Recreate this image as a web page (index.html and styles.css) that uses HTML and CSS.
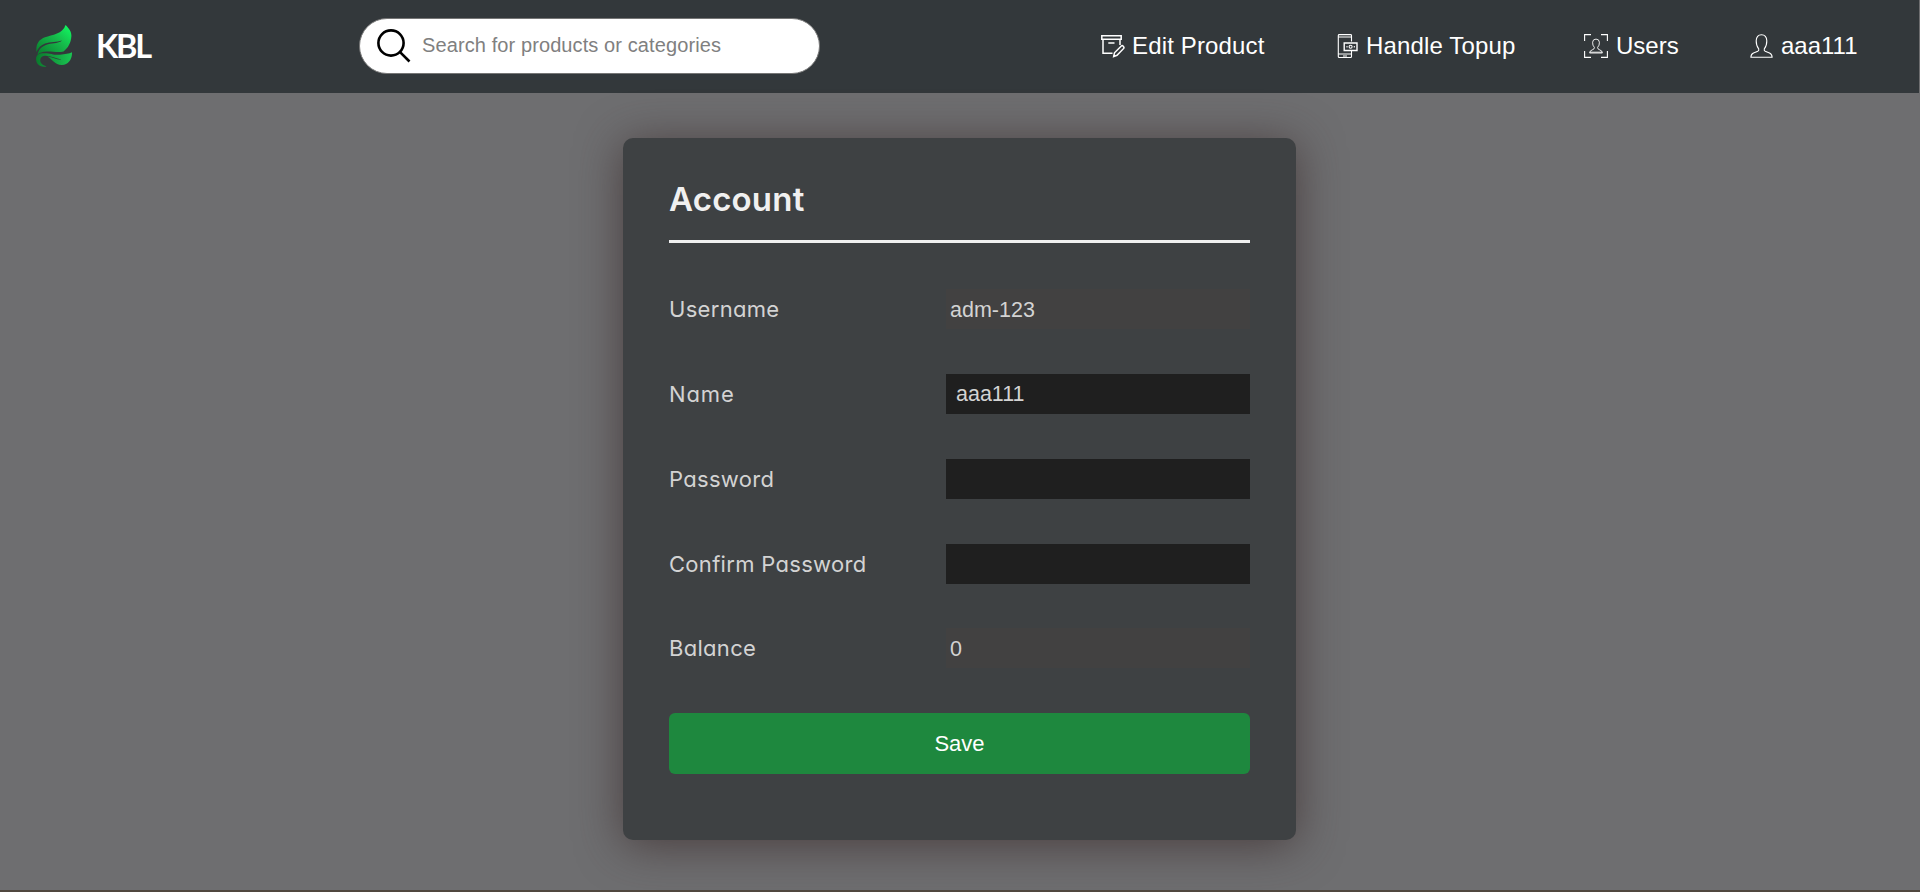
FILE: index.html
```html
<!DOCTYPE html>
<html lang="en">
<head>
<meta charset="utf-8">
<title>KBL - Account</title>
<link rel="stylesheet" href="styles.css">
</head>
<body>
<header class="header">
  <a class="brand">
    <svg class="brand-icon" viewBox="0 0 36 42" width="36" height="42">
      <defs>
        <linearGradient id="leaf" x1="0" y1="1" x2="1" y2="0"><stop offset="0" stop-color="#087a2b"/><stop offset=".55" stop-color="#16b84a"/><stop offset="1" stop-color="#10ff63"/></linearGradient>
        <linearGradient id="leaf2" x1="0" y1="0" x2="1" y2="0"><stop offset="0" stop-color="#0a7a2c"/><stop offset="1" stop-color="#1ac552"/></linearGradient>
      </defs>
      <path fill="url(#leaf)" d="M.4 27C-.3 19 3 14.500 9 12.300C16 9.800 27 9 29.500 0C32.500 3 35.500 6 35.400 11C35 18 32 23 27.500 26.500C22 28 17 26.300 11 26.500C6.500 26.500 3 28 1.500 30C2 25 6 20.800 12 19.200C18 18.200 23 18.200 26 15.500C21 17.300 14 16.800 9 18.600C5 20.200 2 23 .4 27Z"/>
      <path fill="url(#leaf2)" d="M.1 33C.5 30 3 28.300 7.500 28.200C15 28 18 30.500 24 29.700C29 29 33 29 36 27.300C36.300 34 32.500 39.800 26 40C19 40.200 16.500 34.500 11.500 31.600C17 32.400 20.500 35 25.500 34.600C20 33.400 14 30.400 8.500 30.800C3 31.600 1.800 38.800 10.500 41.400C3 42.800-.5 38 .1 33Z"/>
    </svg>
    <span class="brand-name">KBL</span>
  </a>
  <div class="search">
    <svg class="search-icon" viewBox="0 0 34 34" width="34" height="34"><circle cx="14" cy="14" r="12.6"/><path d="M22.8 22.8 32.5 32.5"/></svg>
    <input class="search-input" type="text" placeholder="Search for products or categories">
  </div>
  <nav class="nav">
    <a class="nav-item nav-edit">
      <svg viewBox="0 0 24 24" width="24" height="24"><path stroke-width="1.5" d="M.8 1.8H20.2V5.3H.8ZM2 5.5V19.2H11.5M19 5.5V11M7.3 9H13.5M12.7 22.5 13.5 18.8 20.3 12Q21.2 11.2 22.3 12.2T22.7 14.4L16 21.3Z"/></svg>
      <span>Edit Product</span>
    </a>
    <a class="nav-item nav-topup">
      <svg viewBox="0 0 24 24" width="24" height="24"><path d="M14.500 7.500V1.500Q14.500.6 13.500.6H2.300Q1.300.6 1.300 1.500V22.500Q1.300 23.500 2.300 23.500H13.500Q14.500 23.500 14.500 22.500V17M1.500 3H14.500M1.500 20H14.500M6 22H10"/><path stroke-width="1.400" d="M7.200 9H20V16.500H7.200Z"/><circle cx="13.600" cy="12.700" r="1.500"/><path d="M10 12V13.500M17.300 12V13.500"/></svg>
      <span>Handle Topup</span>
    </a>
    <a class="nav-item nav-users">
      <svg viewBox="0 0 24 24" width="24" height="24"><path d="M.6 7V.6H7M17 .6H23.4V7M23.4 17V23.4H17M7 23.4H.6V17"/><path stroke-width=".9" d="M5.6 19Q5.600 16.700 8.200 15.900Q10.600 15.200 10.400 13.400Q8.400 11.500 8.600 8.200Q8.800 5.100 12 5.100T15.400 8.200Q15.600 11.500 13.600 13.400Q13.400 15.200 15.800 15.900Q18.400 16.700 18.400 19ZM6 18.200H18"/></svg>
      <span>Users</span>
    </a>
    <a class="nav-item nav-account">
      <svg viewBox="0 0 24 24" width="24" height="24"><path d="M.9 23.300Q.9 20.200 3.500 19L7.800 17.200Q9.200 16.500 8.700 14.800Q6.100 11.800 6.200 6.800Q6.400.7 11.500 .7T16.800 6.800Q16.900 11.800 14.300 14.800Q13.800 16.500 15.200 17.200L19.500 19Q22.200 20.200 22.100 23.300Z"/></svg>
      <span>aaa111</span>
    </a>
  </nav>
</header>
<main class="page">
  <form class="card">
    <h1 class="card-title"><span>Account</span></h1>
    <div class="row"><label class="label">Username</label><div class="readonly">adm-123</div></div>
    <div class="row"><label class="label label-name">Name</label><input class="field" type="text" value="aaa111"></div>
    <div class="row"><label class="label">Password</label><input class="field" type="password"></div>
    <div class="row"><label class="label">Confirm Password</label><input class="field" type="password"></div>
    <div class="row"><label class="label">Balance</label><div class="readonly">0</div></div>
    <button class="save" type="button">Save</button>
  </form>
</main>
</body>
</html>
```
FILE: styles.css
```css
* { box-sizing: border-box; }
body {
  margin: 0;
  height: 892px;
  overflow: hidden;
  display: flex;
  flex-direction: column;
  background: #6e6e70;
  border-bottom: 2px solid #50473f;
  font-family: "Liberation Sans", Arial, sans-serif;
}
.header {
  height: 93px;
  flex: none;
  display: flex;
  align-items: center;
  padding: 0 0 2px 36px;
  background: #33383b;
  border-right: 1px solid #6e6e70;
}
.brand { display: flex; align-items: center; width: 323px; height: 91px; }
.brand-icon { margin-right: 24px; }
.brand-name {
  padding-top: 1px;
  font: 700 32.5px/40px Lato, sans-serif;
  letter-spacing: -2.2px;
  color: #fff;
}
.search {
  display: flex;
  align-items: center;
  width: 461px;
  height: 56px;
  padding: 0 18px 0 17px;
  background: #fff;
  border: 1px solid #767676;
  border-radius: 28px;
}
.search-icon { flex: none; fill: none; stroke: #000; stroke-width: 2.6; }
.search-input {
  flex: 1;
  margin-left: 11px;
  padding: 0 0 2px;
  border: 0;
  outline: 0;
  background: none;
  font: 20px/24px "Liberation Sans", Arial, sans-serif;
  letter-spacing: .1px;
}
.search-input::placeholder { color: #808080; }
.nav { display: flex; flex: 1; margin-left: 281px; }
.nav-item {
  display: flex;
  align-items: center;
  font-size: 24px;
  line-height: 28px;
  color: #fff;
  white-space: nowrap;
}
.nav-item svg { flex: none; margin-right: 7px; fill: none; stroke: #fff; stroke-width: 1.1; }
.nav-edit { width: 236px; letter-spacing: .15px; }
.nav-topup { width: 247px; letter-spacing: .15px; }
.nav-topup svg { margin-right: 5px; }
.nav-users { width: 166px; }
.nav-users svg { margin-right: 8px; }
.page { flex: 1; display: flex; justify-content: center; align-items: flex-start; padding: 45px 1px 0 0; }
.card {
  display: flex;
  flex-direction: column;
  gap: 45px;
  width: 673px;
  height: 702px;
  padding: 35px 46px;
  background: #3e4143;
  border-radius: 10px;
  box-shadow: 0 5px 45px rgba(60, 46, 46, .75);
}
.card-title {
  height: 70px;
  margin: 0 0 1px;
  border-bottom: 3px solid #f0f0f0;
  color: #f0f0f0;
  font: 600 33px/52px Inter, sans-serif;
  font-feature-settings: "cv11";
  letter-spacing: .2px;
}
.row { display: flex; align-items: center; height: 40px; }
.row:nth-of-type(n + 5) { margin-top: -1px; }
.label {
  width: 277px;
  font: 400 22px/40px Inter, sans-serif;
  font-feature-settings: "cv11";
  letter-spacing: .3px;
  color: #d3d3d3;
}
.label-name { letter-spacing: .9px; }
.field, .readonly {
  width: 304px;
  height: 40px;
  color: #d3d3d3;
  font: 21.5px/40px "Liberation Sans", Arial, sans-serif;
}
.field { padding: 0 10px; border: 0; outline: 0; background: #1f1f1f; }
.readonly { padding-left: 4px; line-height: 42px; background: #424141; }
.save {
  height: 61px;
  border: 0;
  border-radius: 6px;
  background: #1e883e;
  color: #fff;
  font: 22px/26px "Liberation Sans", Arial, sans-serif;
}
```
